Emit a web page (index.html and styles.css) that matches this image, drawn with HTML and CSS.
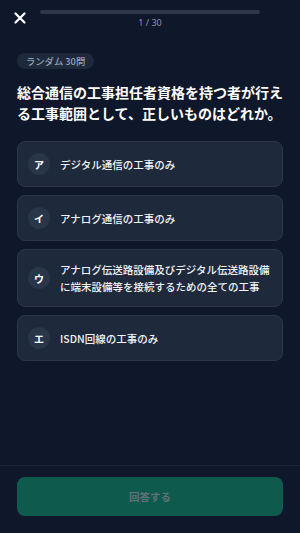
FILE: index.html
```html
<!DOCTYPE html>
<html lang="ja">
<head>
<meta charset="utf-8">
<link rel="stylesheet" href="styles.css">
</head>
<body>
<div class="screen">
  <header class="top">
    <svg class="close" width="12" height="12" viewBox="0 0 12 12"><path d="M1.5 1.5 L10.5 10.5 M10.5 1.5 L1.5 10.5" stroke="#fff" stroke-width="2.2" stroke-linecap="round"/></svg>
    <div class="progress">
      <div class="bar"></div>
      <div class="count">1 / 30</div>
    </div>
  </header>
  <main class="content">
    <span class="tag">ランダム 30問</span>
    <h1 class="question">総合通信の工事担任者資格を持つ者が行える工事範囲として、正しいものはどれか。</h1>
    <div class="options">
      <div class="option"><span class="badge">ア</span><span class="text">デジタル通信の工事のみ</span></div>
      <div class="option"><span class="badge">イ</span><span class="text">アナログ通信の工事のみ</span></div>
      <div class="option"><span class="badge">ウ</span><span class="text">アナログ伝送路設備及びデジタル伝送路設備に端末設備等を接続するための全ての工事</span></div>
      <div class="option"><span class="badge">エ</span><span class="text">ISDN回線の工事のみ</span></div>
    </div>
  </main>
  <footer class="footer">
    <button class="submit">回答する</button>
  </footer>
</div>
</body>
</html>
```
FILE: styles.css
```css
html, body {
  margin: 0;
  padding: 0;
  background: #0f172a;
}
body {
  font-family: "Noto Sans CJK JP", "Noto Sans", sans-serif;
  color: #fff;
}
.screen {
  width: 300px;
  height: 533px;
  display: flex;
  flex-direction: column;
}
.top {
  display: flex;
  align-items: flex-start;
  padding: 12px 40px 0 14px;
  gap: 14px;
  height: 41px;
  box-sizing: border-box;
  flex: none;
}
.close {
  display: block;
}
.progress {
  flex: 1;
  display: flex;
  flex-direction: column;
  align-items: center;
  margin-top: -2px;
}
.bar {
  width: 100%;
  height: 4px;
  border-radius: 2px;
  background: #2c3749;
}
.count {
  font-family: "Noto Sans", sans-serif;
  font-size: 9px;
  line-height: 12px;
  margin-top: 3px;
  color: #8c96a6;
}
.content {
  flex: 1;
  display: flex;
  flex-direction: column;
  align-items: stretch;
  padding: 12px 17px 0;
}
.tag {
  align-self: flex-start;
  height: 16px;
  line-height: 16px;
  padding: 0 9px;
  border-radius: 8px;
  background: #1e293b;
  color: #94a3b8;
  font-size: 9.3px;
  font-weight: 500;
}
.question {
  margin: 13px 0 17px;
  font-size: 14px;
  line-height: 21px;
  font-weight: 700;
  color: #fff;
}
.options {
  display: flex;
  flex-direction: column;
  gap: 8px;
}
.option {
  display: flex;
  align-items: center;
  gap: 10px;
  padding: 11px 12px 11px 10px;
  border: 1px solid #2b3749;
  border-radius: 8px;
  background: #1e293b;
}
.badge {
  flex: none;
  width: 22px;
  height: 22px;
  border-radius: 50%;
  background: #293548;
  display: flex;
  align-items: center;
  justify-content: center;
  font-size: 10px;
  font-weight: 700;
  color: #fff;
}
.text {
  font-size: 10.5px;
  line-height: 17px;
  font-weight: 500;
  color: #f1f5f9;
}
.footer {
  flex: none;
  border-top: 1px solid #1c2536;
  padding: 11px 17px 17px;
}
.submit {
  display: block;
  width: 100%;
  height: 39px;
  border: none;
  border-radius: 8px;
  background: #0e5a4c;
  color: #5e7175;
  font-family: "Noto Sans CJK JP", sans-serif;
  font-size: 10.5px;
  font-weight: 700;
}
```
